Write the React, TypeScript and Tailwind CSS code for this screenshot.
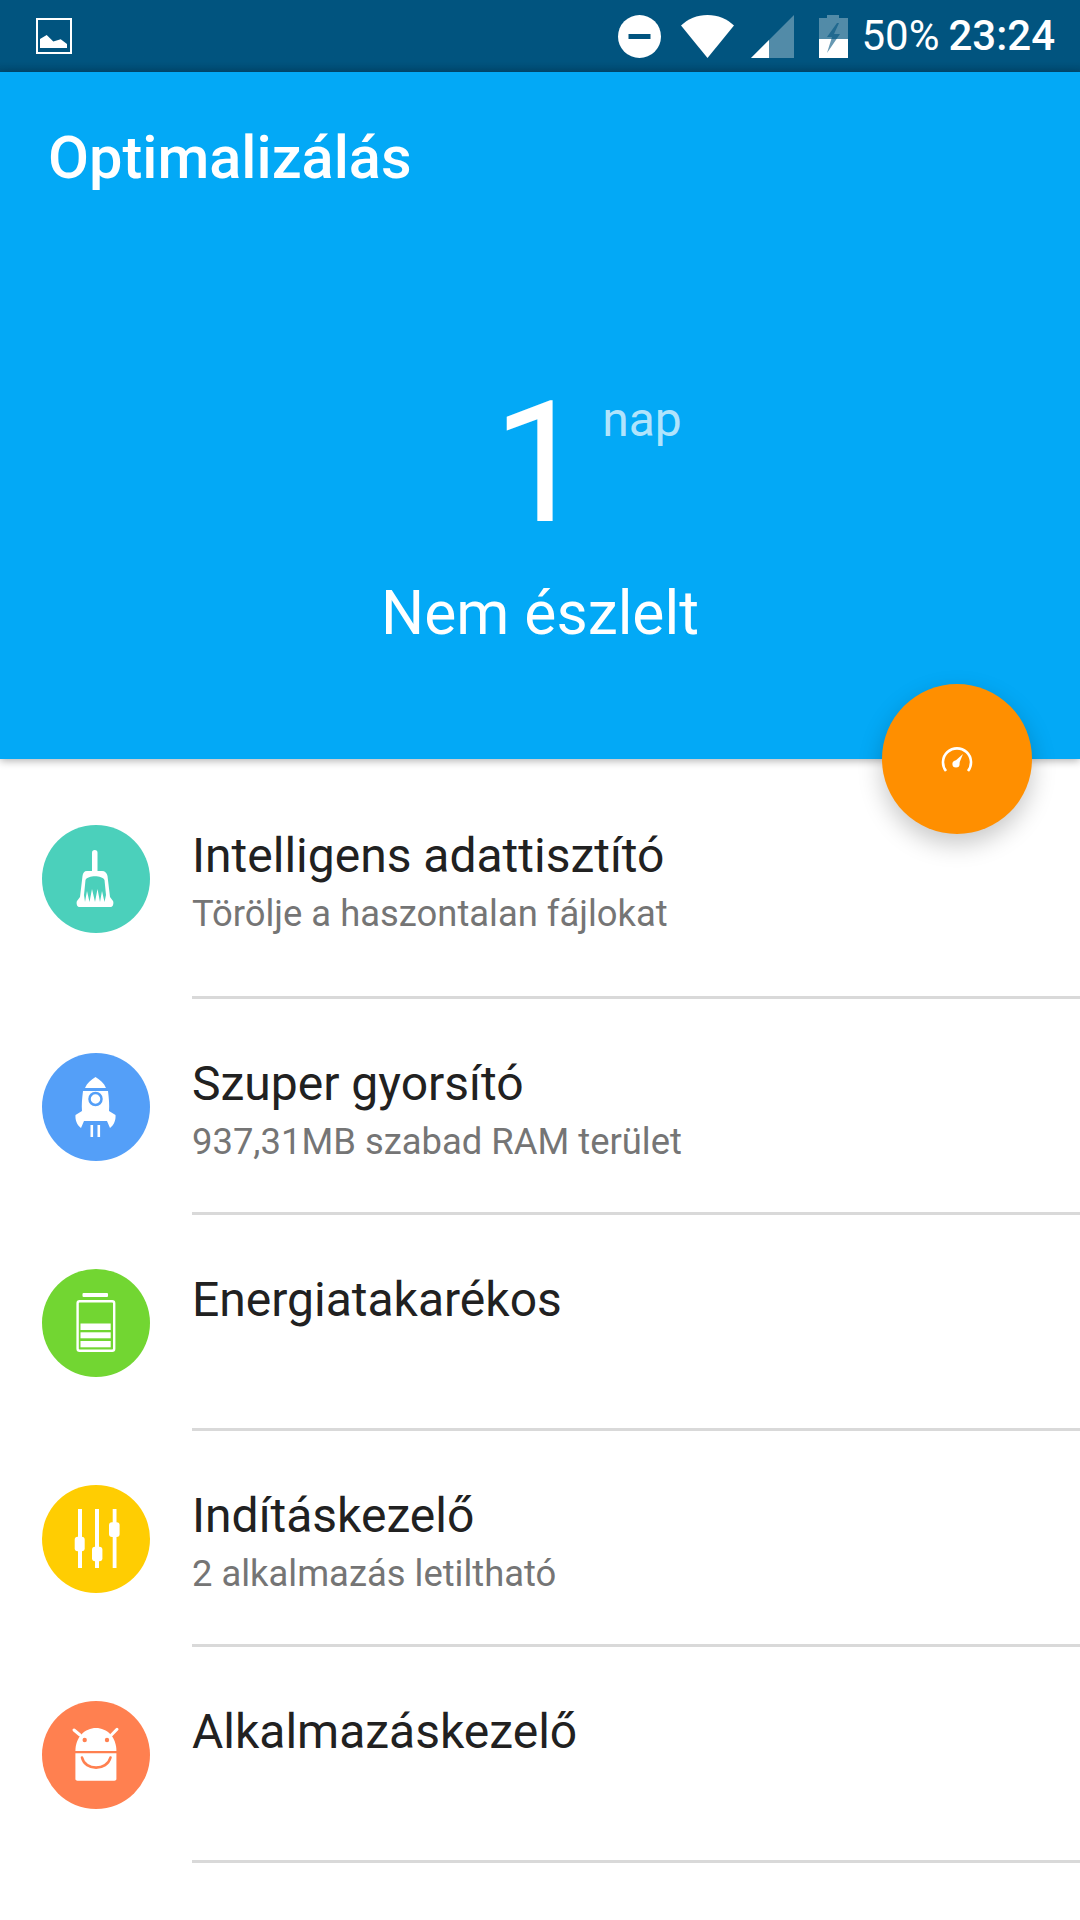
const font = { fontFamily: "Roboto, sans-serif" };

function DndIcon() {
  return (
    <svg width="43" height="43" viewBox="0 0 43 43">
      <circle cx="21.5" cy="21.5" r="21.5" fill="#fff" />
      <rect x="10.5" y="19" width="22" height="5" fill="#01547f" />
    </svg>
  );
}

function WifiIcon() {
  return (
    <svg width="53" height="43" viewBox="0 0 53 43">
      <path d="M0 10.5C7 4 16 0 26.5 0S46 4 53 10.5L26.5 43Z" fill="#fff" />
    </svg>
  );
}

function SignalIcon() {
  return (
    <svg width="43" height="43" viewBox="0 0 43 43">
      <path d="M43 0V43H0Z" fill="#fff" fillOpacity="0.32" />
      <path d="M18 25V43H0Z" fill="#fff" />
    </svg>
  );
}

function BatteryIcon() {
  return (
    <svg width="29" height="43" viewBox="0 0 29 43">
      <path d="M8 0H20V3H29V43H0V3H8Z" fill="#fff" fillOpacity="0.32" />
      <path d="M0 24H29V43H0Z" fill="#fff" />
      <path d="M18 8L8 22H13L8 38L21 19H15L20 8Z" fill="#01547f" fillOpacity="0.6" />
    </svg>
  );
}

function ImageIcon() {
  return (
    <svg width="36" height="36" viewBox="0 0 36 36">
      <rect x="1" y="1" width="34" height="34" fill="none" stroke="#fff" strokeWidth="2" />
      <path d="M4 30V21L10.7 17L17.3 23.5L24.7 21.3L31 26V30Z" fill="#fff" />
    </svg>
  );
}

function GaugeIcon() {
  return (
    <svg width="32" height="28" viewBox="0 0 32 28">
      <path d="M5 26A14 14 0 1 1 27 26" fill="none" stroke="#fff" strokeWidth="2.6" />
      <circle cx="15" cy="19" r="3.6" fill="#fff" />
      <path d="M13 17L22 9L17.5 20Z" fill="#fff" />
    </svg>
  );
}

function BroomIcon() {
  return (
    <svg width="108" height="108" viewBox="0 0 108 108" fill="#fff">
      <rect x="50" y="25" width="5.5" height="24" rx="2.75" />
      <path d="M45 46H60C63 46 65 48 65.5 51L68 72L71 76C72 78 71 82 69 82H37C35 82 34 78 35 76L38 72L40.5 51C41 48 42 46 45 46Z" />
      <path d="M43.5 55C46 50 60 50 62.5 55L64 70L62.5 77L60 66L58 77L55.5 64L53 77L50 64L47.5 77L45 66L43 77L42 70Z" fill="#4bd0bb" />
    </svg>
  );
}

function RocketIcon() {
  return (
    <svg width="108" height="108" viewBox="0 0 108 108" fill="#fff">
      <path d="M43 35C45 30 49 27 53.5 24C58 27 62 30 64 35Z" />
      <path d="M41 38H66C67 46 67.5 52 67 58L73.5 62C74 67 72 72 68 75L65 68H42L39 75C35 72 33 67 33.5 62L40 58C39.5 52 40 46 41 38Z" />
      <circle cx="53.5" cy="46" r="6" fill="none" stroke="#549ff8" strokeWidth="2.5" />
      <rect x="48.5" y="72" width="2.6" height="12" />
      <rect x="55.5" y="72" width="2.6" height="12" />
    </svg>
  );
}

function BatteryRowIcon() {
  return (
    <svg width="108" height="108" viewBox="0 0 108 108" fill="#fff">
      <rect x="40.5" y="24" width="25.5" height="4" rx="1" />
      <rect x="35.6" y="32.2" width="36.6" height="49.6" rx="2" fill="none" stroke="#fff" strokeWidth="2.4" />
      <rect x="38.5" y="54.5" width="30.2" height="6.5" />
      <rect x="38.5" y="63.3" width="30.2" height="6" />
      <rect x="38.5" y="72" width="30.2" height="6.3" />
    </svg>
  );
}

function SlidersIcon() {
  return (
    <svg width="108" height="108" viewBox="0 0 108 108" fill="#fff">
      <rect x="36" y="24" width="4" height="59" />
      <rect x="53" y="24" width="4" height="59" />
      <rect x="70.7" y="24" width="3.8" height="59" />
      <rect x="32.7" y="51.7" width="10" height="14.5" rx="3" />
      <rect x="50" y="61.7" width="10.4" height="14.5" rx="3" />
      <rect x="67" y="37.3" width="10.6" height="14.7" rx="3" />
    </svg>
  );
}

function AndroidBagIcon() {
  return (
    <svg width="108" height="108" viewBox="0 0 108 108" fill="#fff">
      <path d="M33.4 50C33.4 36 43 27 54 27S74.4 36 74.4 50Z" />
      <path d="M32 29L38 34M75 28.3L69.4 34" stroke="#fff" strokeWidth="3" strokeLinecap="round" />
      <path d="M33.4 52.3H74.4V78C74.4 79 73.4 79.7 72.4 79.7H35.4C34.4 79.7 33.4 79 33.4 78Z" />
      <circle cx="42.7" cy="39" r="2.2" fill="#ff8050" />
      <circle cx="65" cy="39" r="2.2" fill="#ff8050" />
      <path d="M40 56.5C43 70 65 70 68.5 56.5" fill="none" stroke="#ff8050" strokeWidth="2.6" strokeLinecap="round" />
    </svg>
  );
}

const rows = [
  { title: "Intelligens adattisztító", sub: "Törölje a haszontalan fájlokat", color: "bg-[#4bd0bb]", height: "h-[228px]", icon: <BroomIcon /> },
  { title: "Szuper gyorsító", sub: "937,31MB szabad RAM terület", color: "bg-[#549ff8]", height: "h-[216px]", icon: <RocketIcon /> },
  { title: "Energiatakarékos", sub: "", color: "bg-[#72d632]", height: "h-[216px]", icon: <BatteryRowIcon /> },
  { title: "Indításkezelő", sub: "2 alkalmazás letiltható", color: "bg-[#ffcd02]", height: "h-[216px]", icon: <SlidersIcon /> },
  { title: "Alkalmazáskezelő", sub: "", color: "bg-[#ff8050]", height: "h-[216px]", icon: <AndroidBagIcon /> },
];

export default function App() {
  return (
    <div className="relative w-[1080px] h-[1920px] overflow-hidden bg-white" style={font}>
      <div className="h-[72px] bg-linear-to-b from-[#01547f] from-85% to-[#014b72] flex items-center pl-9 pr-[25px] text-white">
        <ImageIcon />
        <div className="ml-auto flex items-center">
          <DndIcon />
          <div className="ml-5"><WifiIcon /></div>
          <div className="ml-[17px]"><SignalIcon /></div>
          <div className="ml-[25px]"><BatteryIcon /></div>
          <span className="ml-[13px] text-[42px] leading-none">50%</span>
          <span className="ml-[9px] text-[42px] leading-none font-medium">23:24</span>
        </div>
      </div>

      <div className="h-[687px] bg-[#03a9f6] text-white shadow-[0_2px_8px_rgba(0,0,0,0.3)] relative">
        <div className="pl-[48px] pt-[52px] text-[59.5px] leading-[68px] font-medium">Optimalizálás</div>
        <div className="mt-[188px] flex justify-center">
          <div className="relative text-[168px] leading-[168px] font-normal">
            1
            <span className="absolute left-[100%] top-[10px] ml-[15px] text-[48px] leading-[60px] font-normal text-white/70">nap</span>
          </div>
        </div>
        <div className="mt-[30px] text-center text-[60.5px] leading-[72px]">Nem észlelt</div>
      </div>

      <div className="pt-[12px]">
        {rows.map((row) => (
          <div key={row.title} className={`flex ${row.height}`}>
            <div className={`mt-[54px] ml-[42px] w-[108px] h-[108px] rounded-full shrink-0 ${row.color}`}>{row.icon}</div>
            <div className="ml-[42px] flex-1 border-b-[3px] border-[#d9d9d9] pt-[55px]">
              <div className="text-[48px] leading-[60px] text-[#212121]">{row.title}</div>
              <div className="text-[36.4px] leading-[56px] text-[#757575]">{row.sub}</div>
            </div>
          </div>
        ))}
      </div>

      <div className="absolute left-[882px] top-[684px] w-[150px] h-[150px] rounded-full bg-[#ff8f00] shadow-[0_10px_24px_rgba(0,0,0,0.22)] flex items-center justify-center">
        <GaugeIcon />
      </div>
    </div>
  );
}
